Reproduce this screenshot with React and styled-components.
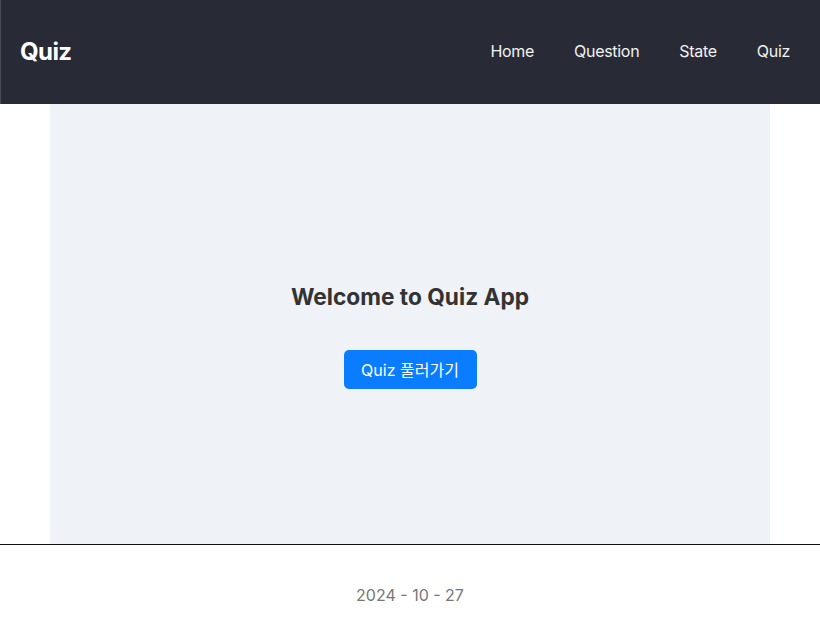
import React from "react";
import styled, { createGlobalStyle } from "styled-components";

const GlobalStyle = createGlobalStyle`
  body {
    margin: 0;
    font-family: Inter, "Noto Sans CJK KR", sans-serif;
    background: #fff;
  }
`;

const Header = styled.header`
  height: 104px;
  background-color: #282a36;
  border-left: 1px solid #4a4c55;
  display: flex;
  align-items: center;
  justify-content: space-between;
  padding: 0 30px 2px 19px;
  box-sizing: border-box;
`;

const Logo = styled.h1`
  margin: 0;
  font-size: 24px;
  font-weight: 700;
  letter-spacing: -0.6px;
  color: #fff;
`;

const Nav = styled.nav`
  display: flex;
  gap: 40px;
`;

const NavLink = styled.a`
  color: #f2f2f2;
  font-size: 16px;
  letter-spacing: -0.3px;
  text-decoration: none;
  cursor: pointer;
`;

const Main = styled.main`
  margin: 0 50px;
  height: 440px;
  box-sizing: border-box;
  padding-top: 23px;
  background-color: #eff2f6;
  display: flex;
  flex-direction: column;
  align-items: center;
  justify-content: center;
  gap: 40px;
`;

const Title = styled.h2`
  margin: 0;
  font-size: 22.7px;
  font-weight: 700;
  color: #333;
`;

const Button = styled.button`
  width: 133px;
  height: 39px;
  border: none;
  border-radius: 5px;
  background-color: #0a7cff;
  color: #fff;
  font-family: Inter, "Noto Sans CJK KR", sans-serif;
  font-size: 16px;
  cursor: pointer;
`;

const Footer = styled.footer`
  border-top: 1px solid #111;
  height: 95px;
  box-sizing: border-box;
  padding-top: 5px;
  display: flex;
  align-items: center;
  justify-content: center;
  color: #777;
  font-size: 16px;
`;

const links = ["Home", "Question", "State", "Quiz"];

export default function App() {
  return (
    <>
      <GlobalStyle />
      <Header>
        <Logo>Quiz</Logo>
        <Nav>
          {links.map((l) => (
            <NavLink key={l}>{l}</NavLink>
          ))}
        </Nav>
      </Header>
      <Main>
        <Title>Welcome to Quiz App</Title>
        <Button>Quiz 풀러가기</Button>
      </Main>
      <Footer>2024 - 10 - 27</Footer>
    </>
  );
}
